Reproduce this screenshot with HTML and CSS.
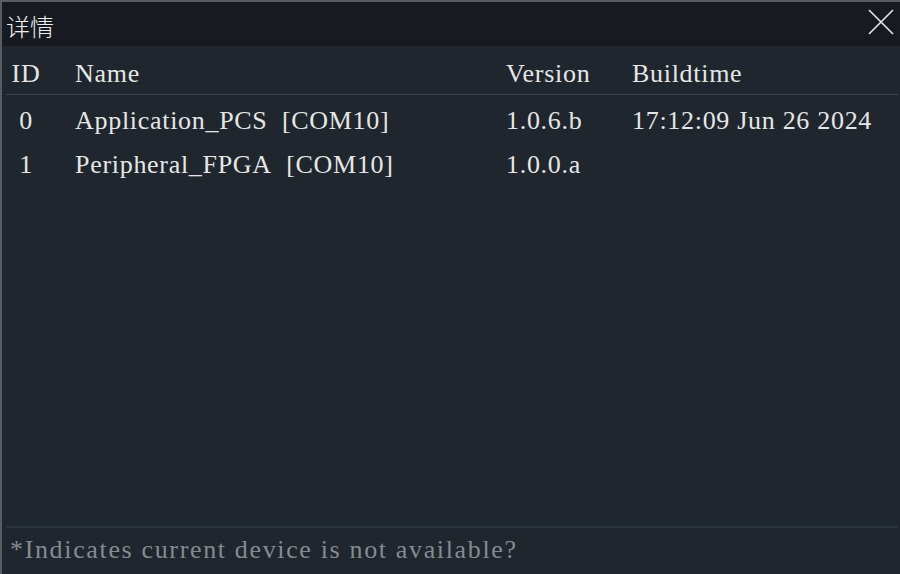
FILE: index.html
```html
<!DOCTYPE html>
<html>
<head>
<meta charset="utf-8">
<link rel="stylesheet" href="styles.css">
</head>
<body>
<div class="window">
  <div class="titlebar">
    <span class="title">详情</span>
    <svg class="close" width="26" height="26" viewBox="0 0 26 26"><path d="M1 1 L25 25 M25 1 L1 25" stroke="#e8e8e8" stroke-width="1.6" fill="none"/></svg>
  </div>
  <div class="content">
    <div class="row head">
      <div class="c id">ID</div>
      <div class="c">Name</div>
      <div class="c">Version</div>
      <div class="c">Buildtime</div>
    </div>
    <div class="row">
      <div class="c id">0</div>
      <div class="c">Application_PCS&nbsp; [COM10]</div>
      <div class="c">1.0.6.b</div>
      <div class="c">17:12:09 Jun 26 2024</div>
    </div>
    <div class="row">
      <div class="c id">1</div>
      <div class="c">Peripheral_FPGA&nbsp; [COM10]</div>
      <div class="c">1.0.0.a</div>
      <div class="c"></div>
    </div>
  </div>
  <div class="footer">*Indicates current device is not available?</div>
</div>
</body>
</html>
```
FILE: styles.css
```css
html, body { margin: 0; padding: 0; }
body { background: #1f272e; }
.window {
  width: 898px;
  height: 572px;
  border-top: 2px solid #585c63;
  border-left: 2px solid #585c63;
  display: flex;
  flex-direction: column;
  background: #1f262d;
  font-family: "Liberation Serif", "Times New Roman", serif;
  color: #e6e6e6;
}
.titlebar {
  height: 44px;
  background: #171b21;
  display: flex;
  align-items: center;
  justify-content: space-between;
  padding: 0 6px 0 4px;
}
.title {
  font-family: "Noto Sans CJK SC", sans-serif;
  font-size: 24px;
  font-weight: 300;
  color: #eeeeee;
  padding-top: 2px;
}
.close { margin-top: -4px; }
.content { flex: 1; padding: 0 0 0 4px; }
.row {
  display: grid;
  grid-template-columns: 40px 460px 126px 1fr;
  height: 44px;
  align-items: center;
  font-size: 26px;
  letter-spacing: 0.7px;
}
.row .c { white-space: nowrap; }
.row .c:nth-child(2) { padding-left: 29px; }
.row .id { text-align: center; }
.head {
  height: 49px;
  border-bottom: 1px solid #3a474f;
  margin-right: 2px;
  margin-bottom: 4px;
  padding-top: 7px;
  box-sizing: border-box;
}
.footer {
  margin-left: 4px;
  margin-right: 2px;
  border-top: 2px solid #27343b;
  height: 48px;
  font-size: 26px;
  letter-spacing: 1.65px;
  color: #868b91;
  padding-left: 4px;
  padding-bottom: 3px;
  box-sizing: border-box;
  display: flex;
  align-items: center;
}
```
